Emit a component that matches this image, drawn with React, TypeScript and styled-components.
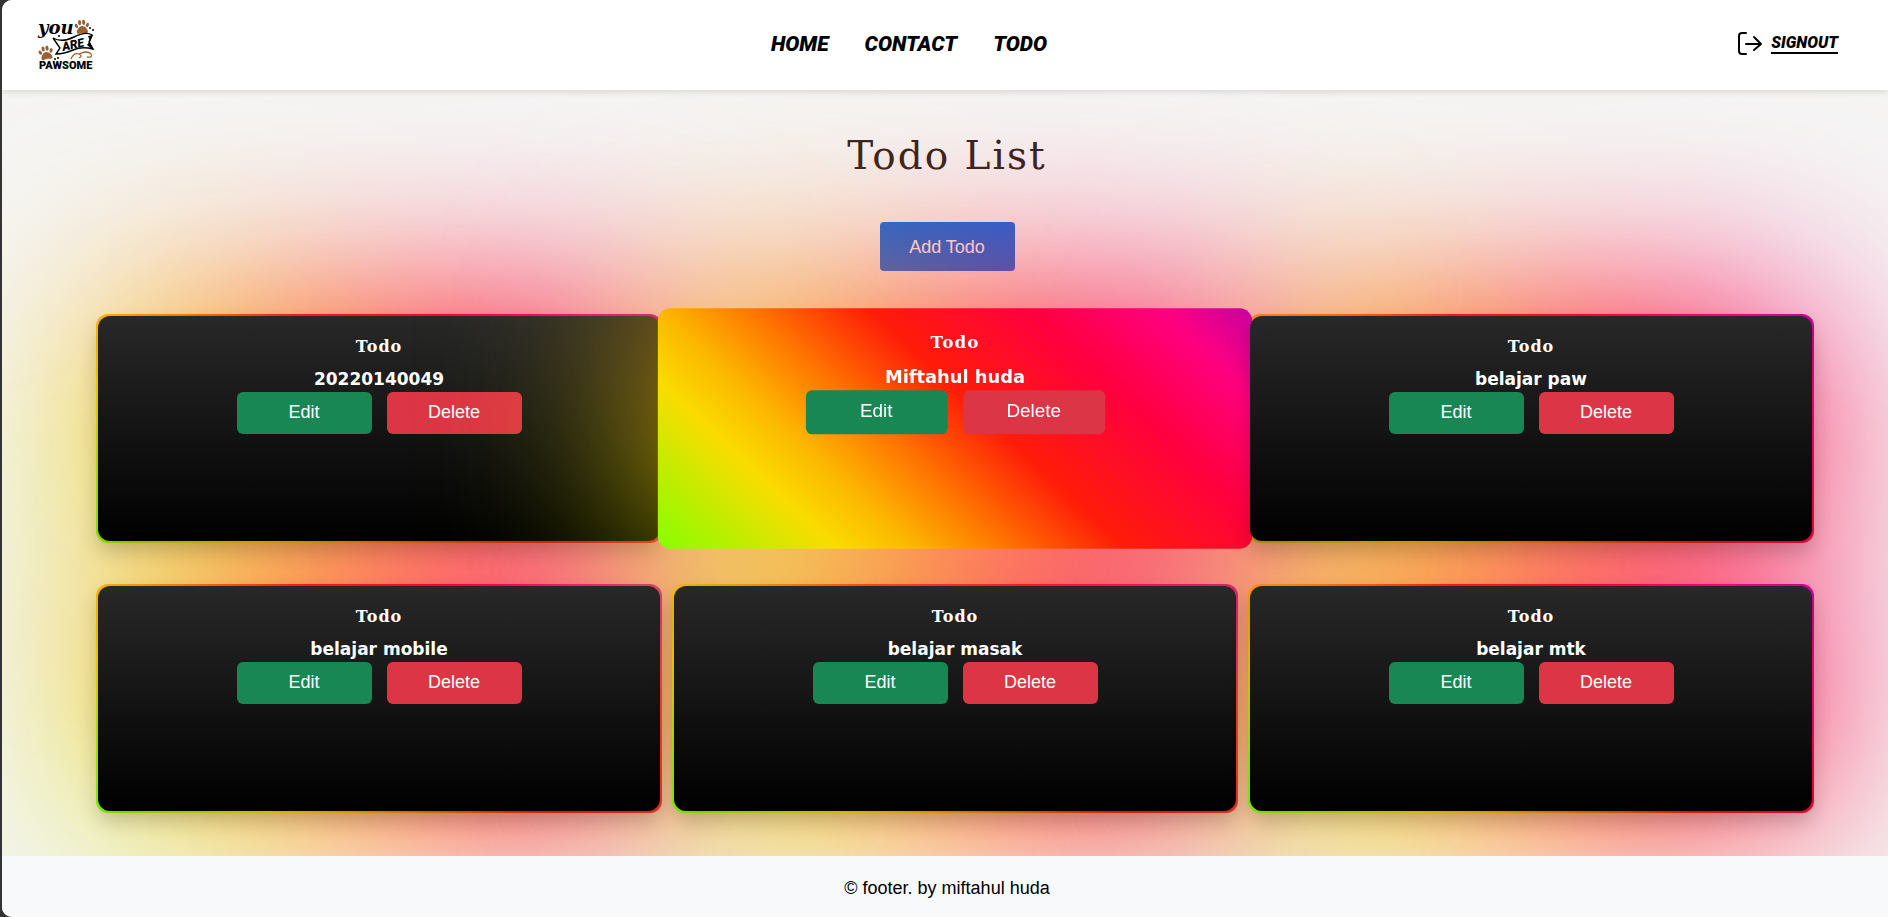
import React from "react";
import styled, { createGlobalStyle, css } from "styled-components";

const rainbow =
  "linear-gradient(43deg, #84ff00 0%, #fadc00 21%, #fcb800 30%, #ff7600 41%, #ff1c08 55%, #ff0040 74%, #ff0080 89%, #c800a0 100%)";
const sans = '"Liberation Sans", Arial, sans-serif';
const display = '"DejaVu Serif", Georgia, serif';
const brush = 'Roboto, "Liberation Sans", sans-serif';

const GlobalStyle = createGlobalStyle`
  *, *::before, *::after { box-sizing: border-box; }
  body { margin: 0; background: #333; font-family: ${sans}; font-size: 18px; }
`;

const Page = styled.div`
  display: flex;
  flex-direction: column;
  min-height: 100vh;
  margin-left: 2px;
  border-radius: 10px 0 0 10px;
  background: #f5f5f4;
  overflow: hidden;
`;

const Header = styled.header`
  z-index: 3;
  display: grid;
  grid-template-columns: 1fr auto 1fr;
  align-items: center;
  height: 90px;
  padding: 0 50px 0 34px;
  background: #fff;
  box-shadow: 0 2px 6px rgba(0, 0, 0, 0.12);
`;

const LogoLink = styled.a`
  display: block;
  width: 60px;
  height: 60px;
`;

const Nav = styled.nav`
  display: flex;
  gap: 36px;
  padding: 0 56px 2px 0;
`;

const NavLink = styled.a`
  color: #000;
  font: italic 900 21px/28px ${brush};
  text-decoration: none;
`;

const SignOut = styled.a`
  display: flex;
  align-items: center;
  justify-self: end;
  gap: 8px;
  padding-bottom: 2px;
  color: #000;
  font: italic 900 16px/18px ${brush};
  text-decoration: none;

  span {
    border-bottom: 2px solid #000;
  }
`;

const Main = styled.main`
  flex: 1;
  display: flex;
  flex-direction: column;
  align-items: center;
  padding: 0 72px 43px 76px;
`;

const Title = styled.h1`
  margin: 40px 0 0;
  color: #33241f;
  font: 400 39px/52px ${display};
  letter-spacing: 2px;
`;

const AddButton = styled.button`
  width: 135px;
  height: 49px;
  margin: 40px 0 43px;
  border: 0;
  border-radius: 4px;
  background: #0a6eea;
  color: #fff;
  font: 400 18px/24px ${sans};
`;

const CardGrid = styled.ul`
  align-self: stretch;
  display: grid;
  grid-template-columns: repeat(3, 1fr);
  gap: 41px 10px;
  margin: 0;
  padding: 0 2px 0 18px;
  list-style: none;
`;

const Card = styled.li<{ $active?: boolean }>`
  display: grid;
  height: 229px;

  &::before,
  &::after {
    content: "";
    grid-area: 1 / 1;
    z-index: 0;
    background: ${rainbow};
    pointer-events: none;
  }

  &::before {
    filter: blur(98px);
  }

  &::after {
    border-radius: 12px;
  }

  ${(p) =>
    p.$active &&
    css`
      z-index: 1;
      transform: scale(1.05);
    `}
`;

const CardBody = styled.div<{ $active?: boolean }>`
  z-index: 1;
  grid-area: 1 / 1;
  display: flex;
  flex-direction: column;
  align-items: center;
  margin: 2px;
  padding-top: 19px;
  border-radius: 12px;
  background: ${(p) => (p.$active ? "transparent" : "linear-gradient(#282828, #000)")};
  box-shadow: ${(p) => (p.$active ? "none" : "0 10px 20px rgba(0, 0, 0, 0.2)")};
  color: #fff;
`;

const CardTitle = styled.h2`
  margin: 0;
  font: 700 16px/24px ${display};
  letter-spacing: 1px;
`;

const CardText = styled.p`
  margin: 7px 0 0;
  font: 700 17px/26px "DejaVu Sans", ${sans};
`;

const Actions = styled.div`
  display: flex;
  gap: 15px;
`;

const ActionButton = styled.button<{ $tone: "green" | "red" }>`
  width: 135px;
  height: 42px;
  padding: 0 0 2px;
  border: 0;
  border-radius: 6px;
  background: ${(p) => (p.$tone === "green" ? "#198754" : "#dc3545")};
  color: #fff;
  font: 400 18px/24px ${sans};
`;

const Footer = styled.footer`
  z-index: 2;
  padding: 20px 0 17px 4px;
  background: #f8f9fb;
  color: #000;
  line-height: 24px;
  text-align: center;
`;

const Paw = ({ x, y, turn }: { x: number; y: number; turn: number }) => (
  <g transform={`translate(${x} ${y}) rotate(${turn})`} fill="#9a6234">
    <path d="M0 -1 C3 -1 6 3 5.500 5.500 C5 7.500 2 6 0 6 C-2 6 -5 7.500 -5.500 5.500 C-6 3 -3 -1 0 -1Z" />
    <ellipse cx="-5.500" cy="-1.500" rx="1.500" ry="2.300" transform="rotate(-25 -5.500 -1.500)" />
    <ellipse cx="-2" cy="-4.500" rx="1.600" ry="2.600" />
    <ellipse cx="2" cy="-4.500" rx="1.600" ry="2.600" />
    <ellipse cx="5.500" cy="-1.500" rx="1.500" ry="2.300" transform="rotate(25 5.500 -1.500)" />
  </g>
);

const Logo = () => (
  <svg width="60" height="60" viewBox="0 0 60 60" role="img" aria-label="You are pawsome">
    <text x="2" y="19" fontFamily="DejaVu Serif, serif" fontSize="18" fontWeight="700" fontStyle="italic">you</text>
    <Paw x={46} y={12} turn={-5} />
    <Paw x={10} y={38} turn={-12} />
    <path d="M17 23 Q26 28 38 22 T56 20 L53 27 L57 34 Q46 31 37 35 T20 39 L24 33 Z" fill="#fff" stroke="#000" strokeWidth="1.400" />
    <path d="M52 21 L57 20 L54 27 L57 35 L51 30 L54 26 Z" />
    <text x="27" y="36" fontFamily="Roboto, sans-serif" fontSize="12" fontWeight="900" fontStyle="italic" transform="rotate(-12 27 36)">ARE</text>
    <path d="M35 44 Q38 37 43 39 Q47 41 43 43 M43 39 Q51 35 55 39 Q57 43 51 42" fill="none" stroke="#9a6234" strokeWidth="1.300" />
    <g>
      <circle cx="23" cy="21" r="1" />
      <circle cx="54" cy="13" r="1" />
      <circle cx="57" cy="15" r="1" />
      <circle cx="22" cy="43" r="1" />
      <circle cx="19" cy="44" r="1" />
    </g>
    <text x="3" y="54" fontFamily="Roboto, sans-serif" fontSize="11" fontWeight="900">PAWSOME</text>
  </svg>
);

const ExitIcon = () => (
  <svg width="26" height="26" viewBox="0 0 26 26" fill="none" stroke="#000" strokeWidth="2" strokeLinecap="round" strokeLinejoin="round" aria-hidden="true">
    <path d="M9 2 H5 Q2 2 2 5 V20 Q2 23 5 23 H9" />
    <path d="M9 13 H24 M17 6 L24 13 L17 19" />
  </svg>
);

const todos = [
  { text: "20220140049" },
  { text: "Miftahul huda", active: true },
  { text: "belajar paw" },
  { text: "belajar mobile" },
  { text: "belajar masak" },
  { text: "belajar mtk" },
];

export default function App() {
  return (
    <>
      <GlobalStyle />
      <Page>
        <Header>
          <LogoLink href="#home">
            <Logo />
          </LogoLink>
          <Nav>
            <NavLink href="#home">HOME</NavLink>
            <NavLink href="#contact">CONTACT</NavLink>
            <NavLink href="#todo">TODO</NavLink>
          </Nav>
          <SignOut href="#signout">
            <ExitIcon />
            <span>SIGNOUT</span>
          </SignOut>
        </Header>
        <Main>
          <Title>Todo List</Title>
          <AddButton type="button">Add Todo</AddButton>
          <CardGrid>
            {todos.map((todo) => (
              <Card key={todo.text} $active={todo.active}>
                <CardBody $active={todo.active}>
                  <CardTitle>Todo</CardTitle>
                  <CardText>{todo.text}</CardText>
                  <Actions>
                    <ActionButton type="button" $tone="green">Edit</ActionButton>
                    <ActionButton type="button" $tone="red">Delete</ActionButton>
                  </Actions>
                </CardBody>
              </Card>
            ))}
          </CardGrid>
        </Main>
        <Footer>© footer. by miftahul huda</Footer>
      </Page>
    </>
  );
}
